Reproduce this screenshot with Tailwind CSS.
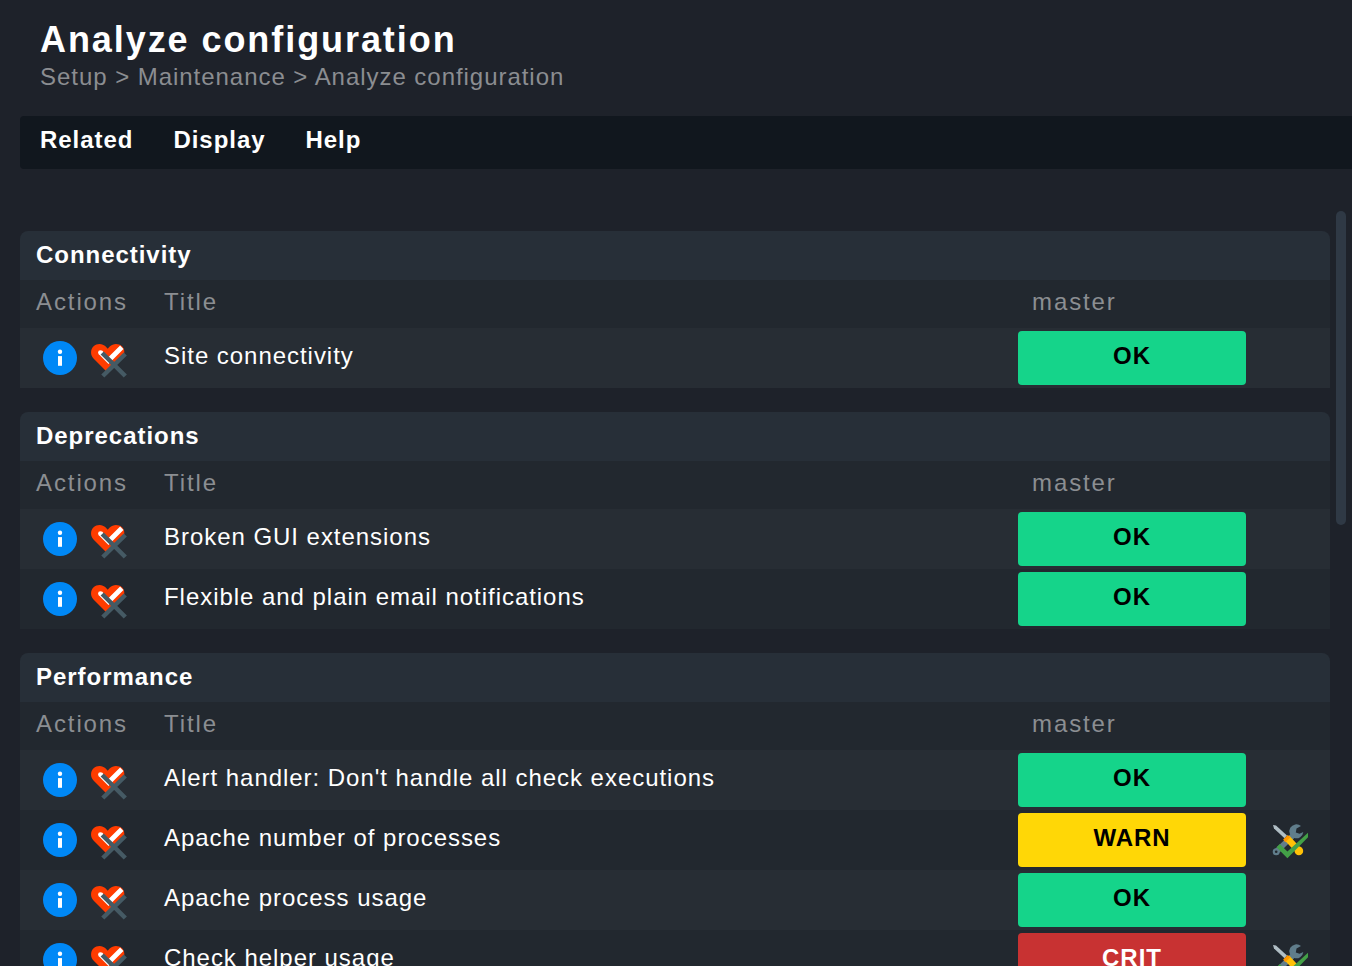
<!DOCTYPE html>
<html lang="en">
<head>
<meta charset="utf-8">
<title>Analyze configuration</title>
<script src="https://cdn.jsdelivr.net/npm/@tailwindcss/browser@4"></script>
</head>
<body class="h-screen overflow-hidden bg-[#1e222a] font-['Nimbus_Sans','Liberation_Sans',Helvetica,sans-serif] text-2xl/[28px] tracking-[0.96px] text-white">
<svg class="hidden">
  <symbol id="info" viewBox="0 0 40 40">
    <circle cx="20" cy="20" r="17" fill="#0088f6"/>
    <circle cx="20" cy="13.800" r="2.200" fill="#fff"/>
    <path d="M18 18.100h4v9.700h-4z" fill="#fff"/>
  </symbol>
  <symbol id="heart" viewBox="0 0 40 40">
    <path d="M19.5 34.500 5.500 20.500C2.200 17 2.300 11.500 5.600 8.300 9 5 14.500 5.100 17.700 8.500L19.700 10.700 21.700 8.500C25 5.200 30.500 5 34 8.300 37 11.500 37 16 34.500 19.500Z" fill="#ff3c00"/>
    <path d="M12.300 14.300 20.500 22.500 33.800 9.200" fill="none" stroke="#fff" stroke-width="4.800"/>
    <circle cx="12.400" cy="14.500" r="2.300" fill="#fff"/>
    <path d="M14.200 15 37.300 38M37.300 16 14.800 38" fill="none" stroke="#455a64" stroke-width="4.500"/>
  </symbol>
  <symbol id="fix" viewBox="0 0 40 40">
    <path d="M7 31 25 13.500" stroke="#607d8b" stroke-width="5.500" fill="none"/>
    <circle cx="6.200" cy="31.800" r="3.500" fill="#607d8b"/>
    <circle cx="6.200" cy="31.800" r="1.300" fill="#22282f"/>
    <path d="M31 6.100A7 7 0 1 0 33.300 12L29.500 13.800 25.800 12.500 26.500 8.500Z" fill="#607d8b"/>
    <path d="M3 5 6 5.500 17 15.500 14.500 18.200 4 8.500Z" fill="#b0bec5"/>
    <path d="m17 18 11.500 12.500" stroke="#ffc107" stroke-width="6.500" fill="none"/>
    <circle cx="28.900" cy="30.900" r="4.300" fill="#ffc107"/>
    <path d="m13.200 19.500 4.500-4.500 3 2.200-5.500 5Z" fill="#ff9800"/>
    <path d="M6.500 27.300 9.800 24.100 17.400 31.500 38 12.800V17.300L17.400 38.300Z" fill="#43a047"/>
  </symbol>
</svg>
<div class="flex h-full flex-col">
  <header class="shrink-0 pl-5">
    <div class="h-[116px] pt-[19px] pl-5">
      <h1 class="h-11 text-4xl/[42px] font-bold tracking-[1.93px]">Analyze configuration</h1>
      <p class="text-[#8b8d91]">Setup &gt; Maintenance &gt; Analyze configuration</p>
    </div>
    <nav class="flex h-[53px] gap-10 rounded-l bg-[#11171e] pt-2.5 pl-5 font-bold">
      <a>Related</a><a>Display</a><a>Help</a>
    </nav>
  </header>
  <div class="flex min-h-0 flex-1 pt-[42px] pl-5">
    <main id="groups" class="flex w-[1310px] flex-col gap-6 overflow-hidden pt-5"></main>
    <div class="ml-1.5 h-[314px] w-2.5 rounded-[5px] bg-[#2f3945]"></div>
  </div>
</div>
<script>
const groups = [
  ["Connectivity", [["Site connectivity", "OK"]]],
  ["Deprecations", [["Broken GUI extensions", "OK"], ["Flexible and plain email notifications", "OK"]]],
  ["Performance", [["Alert handler: Don't handle all check executions", "OK"], ["Apache number of processes", "WARN"], ["Apache process usage", "OK"], ["Check helper usage", "CRIT"]]]
];
const tone = {
  OK: "bg-[#15d48a] text-black",
  WARN: "bg-[#ffd706] text-black",
  CRIT: "bg-[#c83232] text-white"
};
document.getElementById("groups").innerHTML = groups.map(([name, rows]) => `
  <section class="shrink-0">
    <h2 class="h-[49px] rounded-t-lg bg-[#272f38] pt-2.5 pl-4 font-bold">${name}</h2>
    <div class="flex h-12 bg-[#22282f] pt-2 pl-4 tracking-[1.9px] text-[#8b8e92]">
      <span class="w-32">Actions</span><span class="w-[868px]">Title</span><span>master</span>
    </div>
    ${rows.map(([title, state], i) => `
    <div class="flex h-[60px] pl-5 ${i % 2 ? "bg-[#22282f]" : "bg-[#272d34]"}">
      <div class="flex w-[124px] gap-2 pt-2.5">
        <svg class="size-10"><use href="#info"/></svg><svg class="size-10"><use href="#heart"/></svg>
      </div>
      <div class="w-[854px] pt-[14px]">${title}</div>
      <div class="my-[3px] w-[228px] rounded pt-[11px] text-center font-bold ${tone[state]}">${state}</div>
      ${state === "OK" ? "" : '<svg class="mt-2.5 ml-6 size-10"><use href="#fix"/></svg>'}
    </div>`).join("")}
  </section>`).join("");
</script>
</body>
</html>
